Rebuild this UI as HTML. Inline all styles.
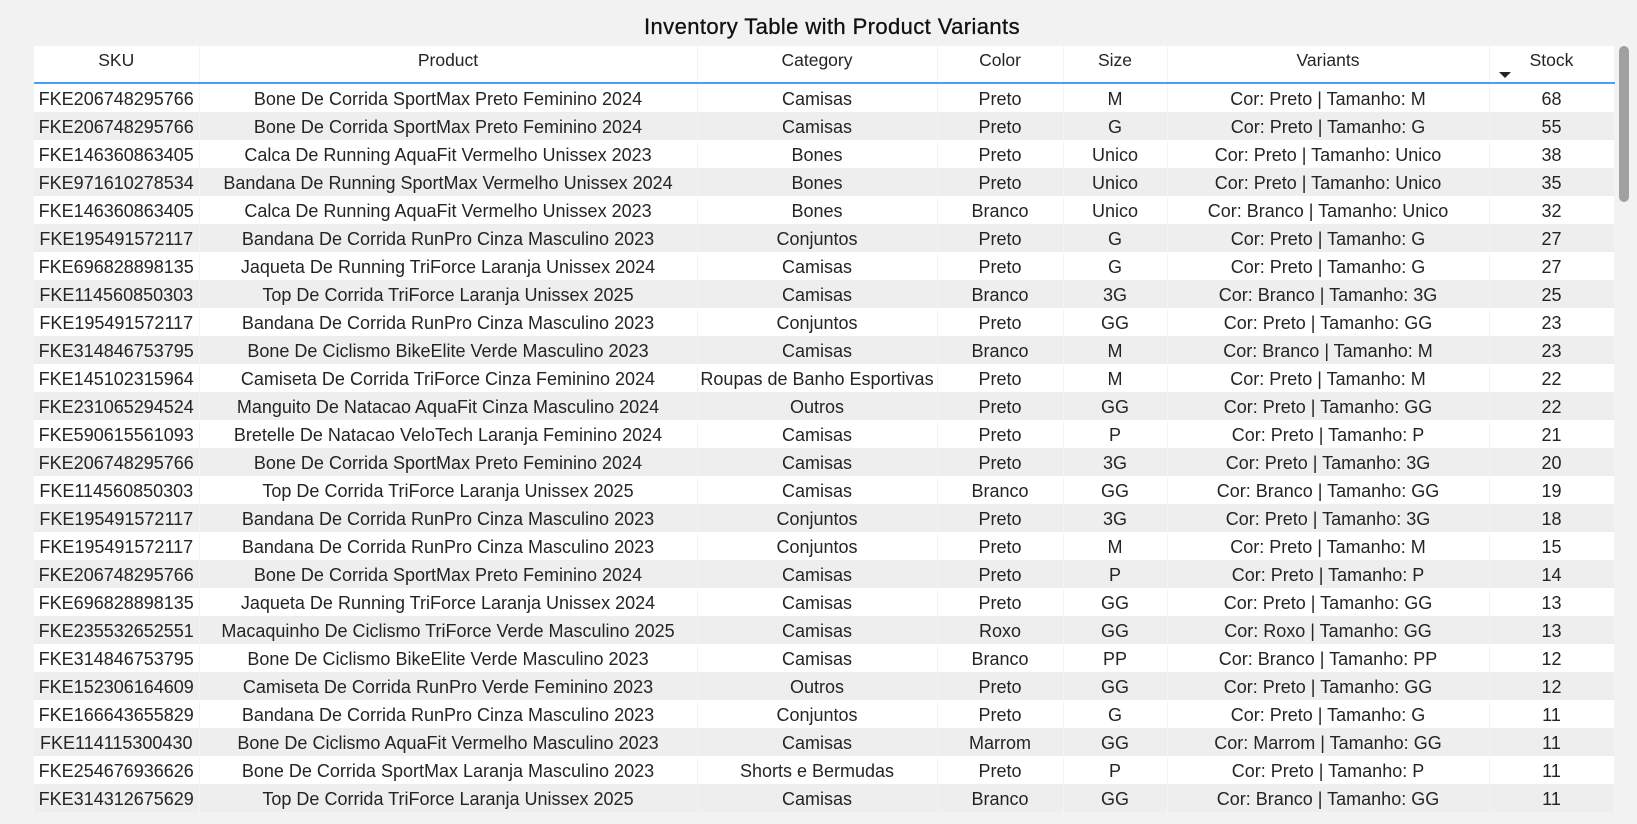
<!DOCTYPE html>
<html><head><meta charset="utf-8">
<style>
*{margin:0;padding:0;box-sizing:border-box}
html,body{width:1637px;height:824px;overflow:hidden;background:#f2f2f2;font-family:"Liberation Sans",sans-serif;color:#252423}
.title{position:absolute;left:0;width:1664px;top:14px;text-align:center;font-size:22px;color:#111;letter-spacing:0.4px;-webkit-text-stroke:0.3px #111}
.tbl{position:absolute;left:34px;top:46px;width:1580px;background:#fff}
table{border-collapse:collapse;table-layout:fixed;width:1580px;font-size:18px}
th{font-weight:normal;height:37px;border-bottom:2px solid #4a9ff0;text-align:center;position:relative;border-right:1px solid #f4f4f4;vertical-align:top;padding-top:4px;font-size:17.5px}
td{height:28px;text-align:center;white-space:nowrap;overflow:hidden;border-right:1px solid #f4f4f4;padding-top:3px;line-height:25px;vertical-align:top}
tr:nth-child(even) td{background:#eeeeee}
.arrow{position:absolute;left:9px;top:26px;width:0;height:0;border-left:6px solid transparent;border-right:6px solid transparent;border-top:6px solid #252423}
.sb{position:absolute;left:1619px;top:46px;width:10px;height:156px;background:#a0a0a0;border-radius:5px}
</style></head><body>
<div class="title">Inventory Table with Product Variants</div>
<div class="tbl">
<table>
<colgroup><col style="width:165px"><col style="width:498px"><col style="width:240px"><col style="width:126px"><col style="width:104px"><col style="width:322px"><col style="width:125px"></colgroup>
<thead><tr><th>SKU</th><th>Product</th><th>Category</th><th>Color</th><th>Size</th><th>Variants</th><th>Stock<span class="arrow"></span></th></tr></thead>
<tbody>
<tr><td>FKE206748295766</td><td>Bone De Corrida SportMax Preto Feminino 2024</td><td>Camisas</td><td>Preto</td><td>M</td><td>Cor: Preto | Tamanho: M</td><td>68</td></tr>
<tr><td>FKE206748295766</td><td>Bone De Corrida SportMax Preto Feminino 2024</td><td>Camisas</td><td>Preto</td><td>G</td><td>Cor: Preto | Tamanho: G</td><td>55</td></tr>
<tr><td>FKE146360863405</td><td>Calca De Running AquaFit Vermelho Unissex 2023</td><td>Bones</td><td>Preto</td><td>Unico</td><td>Cor: Preto | Tamanho: Unico</td><td>38</td></tr>
<tr><td>FKE971610278534</td><td>Bandana De Running SportMax Vermelho Unissex 2024</td><td>Bones</td><td>Preto</td><td>Unico</td><td>Cor: Preto | Tamanho: Unico</td><td>35</td></tr>
<tr><td>FKE146360863405</td><td>Calca De Running AquaFit Vermelho Unissex 2023</td><td>Bones</td><td>Branco</td><td>Unico</td><td>Cor: Branco | Tamanho: Unico</td><td>32</td></tr>
<tr><td>FKE195491572117</td><td>Bandana De Corrida RunPro Cinza Masculino 2023</td><td>Conjuntos</td><td>Preto</td><td>G</td><td>Cor: Preto | Tamanho: G</td><td>27</td></tr>
<tr><td>FKE696828898135</td><td>Jaqueta De Running TriForce Laranja Unissex 2024</td><td>Camisas</td><td>Preto</td><td>G</td><td>Cor: Preto | Tamanho: G</td><td>27</td></tr>
<tr><td>FKE114560850303</td><td>Top De Corrida TriForce Laranja Unissex 2025</td><td>Camisas</td><td>Branco</td><td>3G</td><td>Cor: Branco | Tamanho: 3G</td><td>25</td></tr>
<tr><td>FKE195491572117</td><td>Bandana De Corrida RunPro Cinza Masculino 2023</td><td>Conjuntos</td><td>Preto</td><td>GG</td><td>Cor: Preto | Tamanho: GG</td><td>23</td></tr>
<tr><td>FKE314846753795</td><td>Bone De Ciclismo BikeElite Verde Masculino 2023</td><td>Camisas</td><td>Branco</td><td>M</td><td>Cor: Branco | Tamanho: M</td><td>23</td></tr>
<tr><td>FKE145102315964</td><td>Camiseta De Corrida TriForce Cinza Feminino 2024</td><td>Roupas de Banho Esportivas</td><td>Preto</td><td>M</td><td>Cor: Preto | Tamanho: M</td><td>22</td></tr>
<tr><td>FKE231065294524</td><td>Manguito De Natacao AquaFit Cinza Masculino 2024</td><td>Outros</td><td>Preto</td><td>GG</td><td>Cor: Preto | Tamanho: GG</td><td>22</td></tr>
<tr><td>FKE590615561093</td><td>Bretelle De Natacao VeloTech Laranja Feminino 2024</td><td>Camisas</td><td>Preto</td><td>P</td><td>Cor: Preto | Tamanho: P</td><td>21</td></tr>
<tr><td>FKE206748295766</td><td>Bone De Corrida SportMax Preto Feminino 2024</td><td>Camisas</td><td>Preto</td><td>3G</td><td>Cor: Preto | Tamanho: 3G</td><td>20</td></tr>
<tr><td>FKE114560850303</td><td>Top De Corrida TriForce Laranja Unissex 2025</td><td>Camisas</td><td>Branco</td><td>GG</td><td>Cor: Branco | Tamanho: GG</td><td>19</td></tr>
<tr><td>FKE195491572117</td><td>Bandana De Corrida RunPro Cinza Masculino 2023</td><td>Conjuntos</td><td>Preto</td><td>3G</td><td>Cor: Preto | Tamanho: 3G</td><td>18</td></tr>
<tr><td>FKE195491572117</td><td>Bandana De Corrida RunPro Cinza Masculino 2023</td><td>Conjuntos</td><td>Preto</td><td>M</td><td>Cor: Preto | Tamanho: M</td><td>15</td></tr>
<tr><td>FKE206748295766</td><td>Bone De Corrida SportMax Preto Feminino 2024</td><td>Camisas</td><td>Preto</td><td>P</td><td>Cor: Preto | Tamanho: P</td><td>14</td></tr>
<tr><td>FKE696828898135</td><td>Jaqueta De Running TriForce Laranja Unissex 2024</td><td>Camisas</td><td>Preto</td><td>GG</td><td>Cor: Preto | Tamanho: GG</td><td>13</td></tr>
<tr><td>FKE235532652551</td><td>Macaquinho De Ciclismo TriForce Verde Masculino 2025</td><td>Camisas</td><td>Roxo</td><td>GG</td><td>Cor: Roxo | Tamanho: GG</td><td>13</td></tr>
<tr><td>FKE314846753795</td><td>Bone De Ciclismo BikeElite Verde Masculino 2023</td><td>Camisas</td><td>Branco</td><td>PP</td><td>Cor: Branco | Tamanho: PP</td><td>12</td></tr>
<tr><td>FKE152306164609</td><td>Camiseta De Corrida RunPro Verde Feminino 2023</td><td>Outros</td><td>Preto</td><td>GG</td><td>Cor: Preto | Tamanho: GG</td><td>12</td></tr>
<tr><td>FKE166643655829</td><td>Bandana De Corrida RunPro Cinza Masculino 2023</td><td>Conjuntos</td><td>Preto</td><td>G</td><td>Cor: Preto | Tamanho: G</td><td>11</td></tr>
<tr><td>FKE114115300430</td><td>Bone De Ciclismo AquaFit Vermelho Masculino 2023</td><td>Camisas</td><td>Marrom</td><td>GG</td><td>Cor: Marrom | Tamanho: GG</td><td>11</td></tr>
<tr><td>FKE254676936626</td><td>Bone De Corrida SportMax Laranja Masculino 2023</td><td>Shorts e Bermudas</td><td>Preto</td><td>P</td><td>Cor: Preto | Tamanho: P</td><td>11</td></tr>
<tr><td>FKE314312675629</td><td>Top De Corrida TriForce Laranja Unissex 2025</td><td>Camisas</td><td>Branco</td><td>GG</td><td>Cor: Branco | Tamanho: GG</td><td>11</td></tr>
</tbody></table>
</div>
<div class="sb"></div>
</body></html>
